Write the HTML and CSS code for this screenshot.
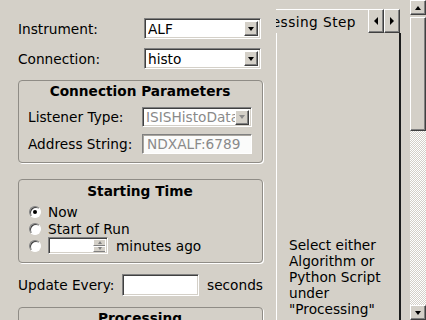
FILE: index.html
```html
<!DOCTYPE html>
<html lang="en">
<head>
  <meta charset="UTF-8">
  <title>Live Data</title>
  <link rel="stylesheet" href="styles.css">
</head>
<body>
  <div class="window">
    <div class="left">
      <div class="row">
        <span class="label">Instrument:</span>
        <div class="combo"><span class="value">ALF</span><span class="drop"><i class="down"></i></span></div>
      </div>
      <div class="row row-second">
        <span class="label">Connection:</span>
        <div class="combo"><span class="value">histo</span><span class="drop"><i class="down"></i></span></div>
      </div>

      <div class="group group-conn">
        <div class="group-title">Connection Parameters</div>
        <div class="grow">
          <span class="glabel">Listener Type:</span>
          <div class="combo combo-small disabled"><span class="value">ISISHistoDataListener</span><span class="drop"><i class="down"></i></span></div>
        </div>
        <div class="grow grow-second">
          <span class="glabel">Address String:</span>
          <div class="field field-ro">NDXALF:6789</div>
        </div>
      </div>

      <div class="group group-start">
        <div class="group-title">Starting Time</div>
        <div class="radio-row"><span class="radio checked"></span>Now</div>
        <div class="radio-row"><span class="radio"></span>Start of Run</div>
        <div class="radio-row">
          <span class="radio"></span>
          <div class="spin"><span class="spin-btns"><span class="sb"><i class="up-s"></i></span><span class="sb"><i class="down-s"></i></span></span></div>
          <span class="after">minutes ago</span>
        </div>
      </div>

      <div class="row row-update">
        <span class="label-update">Update Every:</span>
        <div class="field field-update"></div>
        <span class="after">seconds</span>
      </div>

      <div class="group group-proc">
        <div class="group-title">Processing</div>
      </div>
    </div>

    <div class="tabs">
      <div class="tabbar">
        <div class="tab"><span>Processing Step</span></div>
        <div class="arrows">
          <span class="abtn"><i class="left-a"></i></span>
          <span class="abtn"><i class="right-a"></i></span>
        </div>
      </div>
      <div class="panel">
        <p class="hint">Select either Algorithm or Python Script under "Processing" to set up a processing step.</p>
      </div>
    </div>

    <div class="scroll">
      <span class="sbtn"><i class="up"></i></span>
      <div class="handle"></div>
      <div class="trough"></div>
      <span class="sbtn"><i class="down"></i></span>
    </div>
  </div>
</body>
</html>
```

FILE: styles.css
```css
body {
  margin: 0;
  width: 426px;
  height: 320px;
  overflow: hidden;
  background-color: #d4d0c8;
  font-family: "DejaVu Sans", sans-serif;
  font-size: 13.7px;
  color: #000;
}

.window {
  display: flex;
  height: 320px;
  overflow: hidden;
}

/* left column */
.left {
  width: 245px;
  padding: 18px 0 0 18px;
  flex-shrink: 0;
}

.row {
  display: flex;
  align-items: center;
  height: 21px;
}

.row-second {
  margin-top: 9px;
}

.label {
  width: 126px;
  flex-shrink: 0;
}

.combo {
  display: flex;
  align-items: center;
  width: 117px;
  height: 21px;
  box-sizing: border-box;
  background-color: #fff;
  border: 1px solid;
  border-color: #808080 #fff #fff #808080;
  box-shadow: inset 1px 1px 0 #404040, inset -1px -1px 0 #d4d0c8;
  padding: 2px 2px 2px 3px;
}

.combo .value {
  flex: 1;
  overflow: hidden;
  white-space: nowrap;
}

.drop {
  width: 14px;
  height: 15px;
  box-sizing: border-box;
  display: flex;
  align-items: center;
  justify-content: center;
  background-color: #d4d0c8;
  border: 1px solid;
  border-color: #fff #404040 #404040 #fff;
  box-shadow: inset -1px -1px 0 #808080;
  flex-shrink: 0;
}

i.down, i.down-s {
  display: block;
  width: 0;
  height: 0;
  border-left: 3.5px solid transparent;
  border-right: 3.5px solid transparent;
  border-top: 4px solid #000;
}

i.up, i.up-s {
  display: block;
  width: 0;
  height: 0;
  border-left: 3.5px solid transparent;
  border-right: 3.5px solid transparent;
  border-bottom: 4px solid #000;
}

i.up-s, i.down-s {
  border-left-width: 2.5px;
  border-right-width: 2.5px;
  border-top-color: #808080;
  border-bottom-color: #808080;
}

i.up-s {
  border-bottom-width: 3px;
}

i.down-s {
  border-top-width: 3px;
}

.combo.disabled {
  color: #8a8a8a;
}

.combo.disabled i.down {
  border-top-color: #8a8a8a;
}

.combo-small {
  width: 110px;
  height: 20px;
}

/* group boxes */
.group {
  border: 1px solid #8f8c86;
  border-radius: 4px;
  box-shadow: 1px 1px 0 #fff;
  padding: 2px 10px 8px 9px;
}

.group-title {
  font-weight: bold;
  text-align: center;
  line-height: 16px;
}

.group-conn {
  margin-top: 11px;
}

.grow {
  display: flex;
  align-items: center;
  height: 20px;
  margin-top: 8px;
}

.grow-second {
  margin-top: 7px;
}

.glabel {
  width: 114px;
  flex-shrink: 0;
}

.field {
  height: 20px;
  box-sizing: border-box;
  background-color: #fff;
  border: 1px solid;
  border-color: #808080 #fff #fff #808080;
  box-shadow: inset 1px 1px 0 #404040, inset -1px -1px 0 #d4d0c8;
}

.field-ro {
  width: 110px;
  padding: 1px 4px;
  line-height: 16px;
  color: #8a8a8a;
  background-color: #fbfbfa;
  box-shadow: inset 1px 1px 0 #a9a59e;
}

.group-start {
  margin-top: 16px;
  padding-top: 3px;
}

.group-start .group-title {
  margin-bottom: 4px;
}

.radio-row {
  display: flex;
  align-items: center;
  height: 17px;
}

.radio {
  width: 12px;
  height: 12px;
  box-sizing: border-box;
  border-radius: 50%;
  border: 1px solid;
  border-color: #808080 #fff #fff #808080;
  box-shadow: inset 1px 1px 0 #404040;
  background-color: #fff;
  margin-left: 1px;
  margin-right: 7px;
  display: flex;
  align-items: center;
  justify-content: center;
}

.radio.checked::after {
  content: "";
  width: 4px;
  height: 4px;
  border-radius: 50%;
  background-color: #000;
}

.spin {
  width: 60px;
  height: 17px;
  box-sizing: border-box;
  background-color: #fff;
  border: 1px solid;
  border-color: #808080 #fff #fff #808080;
  box-shadow: inset 1px 1px 0 #404040, inset -1px -1px 0 #d4d0c8;
  display: flex;
  justify-content: flex-end;
  padding: 1px 2px 1px 0;
}

.spin-btns {
  display: flex;
  flex-direction: column;
  width: 12px;
}

.sb {
  flex: 1;
  display: flex;
  align-items: center;
  justify-content: center;
  background-color: #d4d0c8;
  border-top: 1px solid #fff;
  border-left: 1px solid #fff;
  border-bottom: 1px solid #808080;
}

.after {
  margin-left: 8px;
}

.row-update {
  margin-top: 11px;
  height: 22px;
}

.label-update {
  width: 104px;
  flex-shrink: 0;
}

.field-update {
  width: 77px;
  height: 22px;
}

.group-proc {
  margin-top: 11px;
  height: 40px;
}

/* tab widget */
.tabs {
  width: 125px;
  margin-left: 13px;
  margin-top: 9px;
  display: flex;
  flex-direction: column;
  flex-shrink: 0;
}

.tabbar {
  display: flex;
  height: 24px;
}

.tab {
  flex: 1;
  display: flex;
  align-items: center;
  justify-content: flex-end;
  overflow: hidden;
  white-space: nowrap;
  border-top: 1px solid #fff;
  padding-right: 12px;
  letter-spacing: 0.45px;
}

.arrows {
  display: flex;
  margin-right: 1px;
}

.abtn {
  width: 16px;
  height: 24px;
  box-sizing: border-box;
  display: flex;
  align-items: center;
  justify-content: center;
  border: 1px solid;
  border-color: #fff #404040 #404040 #fff;
  box-shadow: inset -1px -1px 0 #808080;
}

i.left-a, i.right-a {
  display: block;
  width: 0;
  height: 0;
  border-top: 4px solid transparent;
  border-bottom: 4px solid transparent;
}

i.left-a {
  border-right: 4px solid #000;
}

i.right-a {
  border-left: 4px solid #000;
}

.panel {
  flex: 1;
  border-left: 1px solid #fff;
  border-right: 2px solid #1c1c1c;
  padding: 204px 0 0 12px;
}

.hint {
  margin: 0;
  width: 100px;
  line-height: 16px;
}

/* scrollbar */
.scroll {
  width: 16px;
  margin-left: 9px;
  display: flex;
  flex-direction: column;
  flex-shrink: 0;
}

.sbtn {
  height: 15px;
  box-sizing: border-box;
  display: flex;
  align-items: center;
  justify-content: center;
  border: 1px solid;
  border-color: #fff #404040 #404040 #fff;
  box-shadow: inset -1px -1px 0 #808080;
  flex-shrink: 0;
}

.handle {
  height: 114px;
  margin-top: 2px;
  box-sizing: border-box;
  border: 1px solid;
  border-color: #fff #404040 #404040 #fff;
  box-shadow: inset -1px -1px 0 #808080;
}

.trough {
  flex: 1;
  background: repeating-conic-gradient(#fff 0 25%, #d4d0c8 0 50%) 0 0 / 2px 2px;
}
```
